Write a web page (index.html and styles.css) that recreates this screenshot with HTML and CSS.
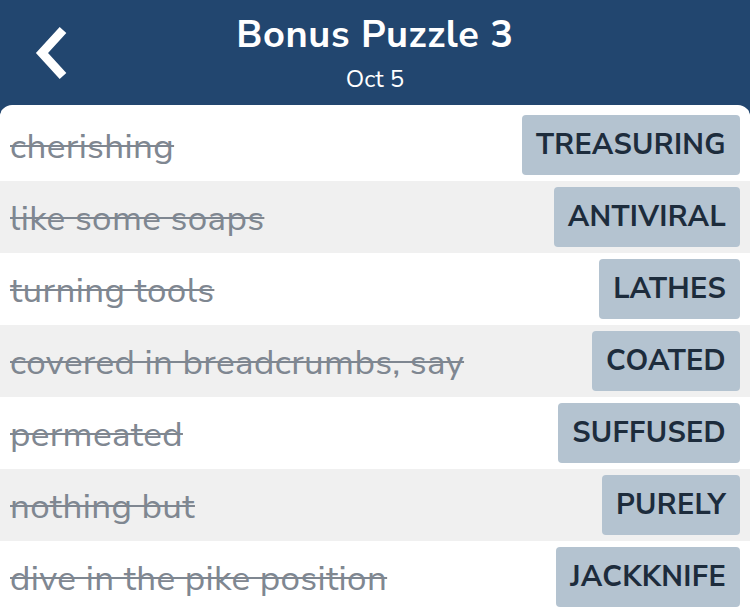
FILE: index.html
```html
<!DOCTYPE html>
<html>
<head>
<meta charset="utf-8">
<link rel="stylesheet" href="styles.css">
</head>
<body>
<div class="app">
  <header class="header">
    <div class="back">
      <svg width="40" height="56" viewBox="0 0 40 56"><polyline points="30,5 9,28 30,51" fill="none" stroke="#fff" stroke-width="9" stroke-linecap="butt" stroke-linejoin="miter"/></svg>
    </div>
    <div class="titles">
      <div class="title">Bonus Puzzle 3</div>
      <div class="subtitle">Oct 5</div>
    </div>
  </header>
  <main class="card">
    <div class="row"><span class="clue">cherishing</span><span class="answer">TREASURING</span></div>
    <div class="row alt"><span class="clue">like some soaps</span><span class="answer">ANTIVIRAL</span></div>
    <div class="row"><span class="clue">turning tools</span><span class="answer">LATHES</span></div>
    <div class="row alt"><span class="clue">covered in breadcrumbs, say</span><span class="answer">COATED</span></div>
    <div class="row"><span class="clue">permeated</span><span class="answer">SUFFUSED</span></div>
    <div class="row alt"><span class="clue">nothing but</span><span class="answer">PURELY</span></div>
    <div class="row"><span class="clue">dive in the pike position</span><span class="answer">JACKKNIFE</span></div>
  </main>
</div>
</body>
</html>
```
FILE: styles.css
```css
html, body {
  margin: 0;
  padding: 0;
}
body {
  width: 750px;
  height: 611px;
  overflow: hidden;
  background: #22466f;
  font-family: "Nunito Sans", Lato, "Open Sans", sans-serif;
}
.app {
  display: flex;
  flex-direction: column;
  height: 611px;
}
.header {
  height: 105px;
  background: #22466f;
  position: relative;
  display: flex;
  justify-content: center;
  align-items: flex-start;
  color: #fff;
}
.back {
  position: absolute;
  left: 33px;
  top: 25px;
}
.titles {
  display: flex;
  flex-direction: column;
  align-items: center;
  padding-top: 12px;
}
.title {
  font-weight: 700;
  font-size: 38px;
  line-height: 46px;
  letter-spacing: 0.6px;
}
.subtitle {
  font-size: 24px;
  line-height: 34px;
  margin-top: 4px;
}
.card {
  flex: 1;
  background: #fff;
  border-radius: 12px 12px 0 0;
  padding-top: 4px;
  overflow: hidden;
}
.row {
  height: 72px;
  display: flex;
  align-items: center;
  justify-content: space-between;
  padding: 0 10px;
  background: #fff;
}
.row.alt {
  background: #f0f0f0;
}
.clue {
  font-size: 35px;
  line-height: 40px;
  padding-top: 4px;
  letter-spacing: 0.35px;
  color: #7f8791;
  text-decoration: line-through;
  text-decoration-thickness: 1.5px;
}
.answer {
  background: #b4c3d0;
  color: #1d2c3c;
  font-weight: 700;
  font-size: 29px;
  height: 60px;
  line-height: 60px;
  padding: 0 14px;
  border-radius: 4px;
  letter-spacing: 0.3px;
}
```
